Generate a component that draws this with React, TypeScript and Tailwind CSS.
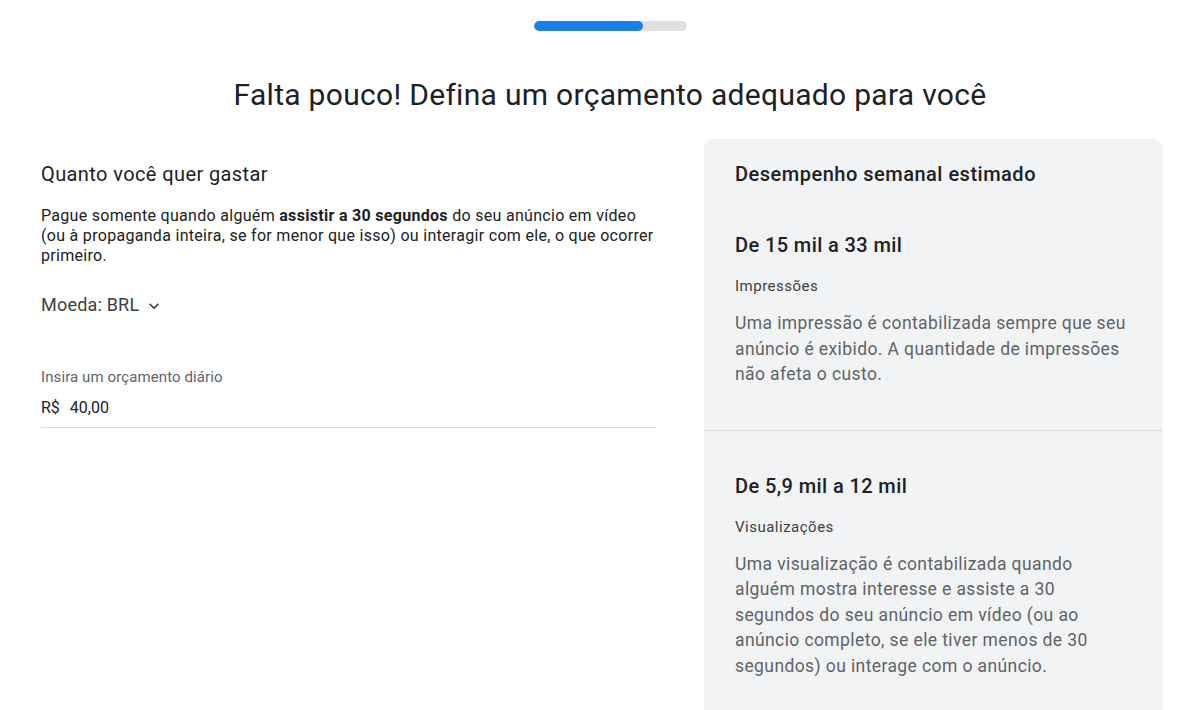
const Chevron = () => (
  <svg width="20" height="20" viewBox="0 0 24 24" className="ml-[5px] mt-[1px]" fill="#3c4043">
    <path d="M7.41 8.59 12 13.17l4.59-4.58L18 10l-6 6-6-6z" />
  </svg>
);

const Estimate = ({ range, label, text }: { range: string; label: string; text: string }) => (
  <div className="px-[31px]">
    <div className="text-[20px] leading-[28px] font-medium tracking-[0.4px] text-[#202124]">{range}</div>
    <div className="mt-[17px] text-[15px] leading-[20px] tracking-[0.5px] text-[#3c4043]">{label}</div>
    <p className="mt-[15px] text-[17.5px] leading-[25.5px] tracking-[0.4px] text-[#5f6368]">{text}</p>
  </div>
);

export default function App() {
  return (
    <div className="min-h-[710px] w-full overflow-hidden bg-white font-['Roboto',sans-serif] text-[#202124]">
      <div className="pl-[20px]">
        <div className="flex justify-center pt-[21px]">
          <div className="h-[10px] w-[153px] overflow-hidden rounded-full bg-[#e0e0e0]">
            <div className="h-full w-[109px] rounded-full bg-[#1a7fe8]" />
          </div>
        </div>

        <h1 className="mt-[46px] text-center text-[30px] leading-[36px] font-normal tracking-[0.3px] text-[#202124]">
          Falta pouco! Defina um orçamento adequado para você
        </h1>
      </div>

      <div className="mt-[26px] flex gap-[47px] pl-[41px] pr-[37px]">
        <div className="w-[616px] shrink-0 pt-[23px]">
          <h2 className="text-[20px] leading-[24px] tracking-[0.4px] text-[#202124]">Quanto você quer gastar</h2>
          <p className="mt-[20px] text-[16px] leading-[20px] tracking-[0.3px] text-[#202124]">
            Pague somente quando alguém <span className="font-bold">assistir a 30 segundos</span> do seu anúncio em vídeo (ou à
            propaganda inteira, se for menor que isso) ou interagir com ele, o que ocorrer primeiro.
          </p>
          <button className="mt-[27px] flex items-center text-[18px] leading-[24px] tracking-[0.2px] text-[#3c4043]">
            Moeda: BRL
            <Chevron />
          </button>
          <div className="mt-[50px] text-[15px] leading-[20px] tracking-[0.1px] text-[#5f6368]">Insira um orçamento diário</div>
          <div className="mt-[11px] flex border-b border-[#dadce0] pb-[9px] text-[16px] leading-[20px] text-[#202124]">
            <span>R$</span>
            <span className="ml-[10px]">40,00</span>
          </div>
        </div>

        <div className="min-h-[600px] w-[459px] shrink-0 rounded-t-[10px] bg-[#f1f3f4] pt-[23px]">
          <h2 className="px-[31px] text-[20px] leading-[24px] font-medium tracking-[0.5px] text-[#202124]">
            Desempenho semanal estimado
          </h2>
          <div className="mt-[45px] border-b border-[#dadce0] pb-[42px]">
            <Estimate
              range="De 15 mil a 33 mil"
              label="Impressões"
              text="Uma impressão é contabilizada sempre que seu anúncio é exibido. A quantidade de impressões não afeta o custo."
            />
          </div>
          <div className="pt-[41px] pb-[40px]">
            <Estimate
              range="De 5,9 mil a 12 mil"
              label="Visualizações"
              text="Uma visualização é contabilizada quando alguém mostra interesse e assiste a 30 segundos do seu anúncio em vídeo (ou ao anúncio completo, se ele tiver menos de 30 segundos) ou interage com o anúncio."
            />
          </div>
        </div>
      </div>
    </div>
  );
}
